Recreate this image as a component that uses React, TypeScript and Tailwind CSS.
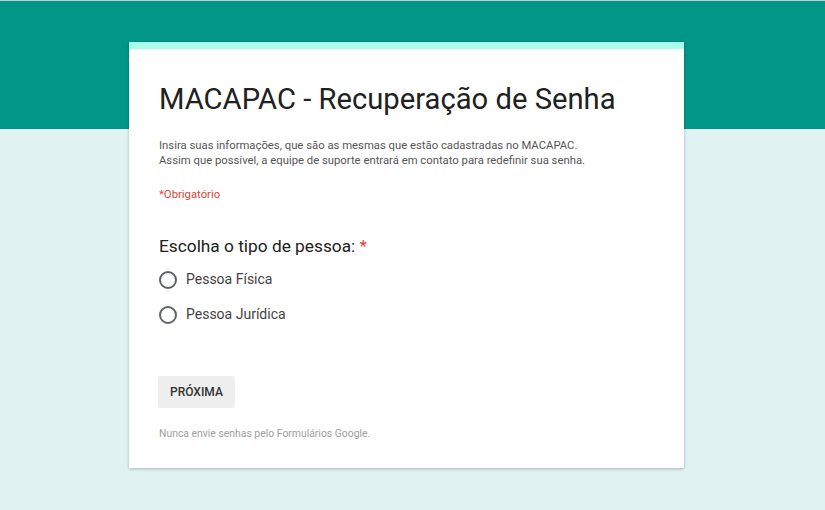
const RadioOption = ({ label }: { label: string }) => {
  return (
    <label className="flex items-center h-[35px] cursor-pointer">
      <span className="w-[18px] h-[18px] rounded-full border-2 border-[#5f6368] box-border" />
      <span className="ml-[9px] text-[14px] text-[#424242]">{label}</span>
    </label>
  );
};

const App = () => {
  return (
    <div className="min-h-[510px] bg-[#e0f2f1] font-['Roboto',sans-serif]">
      {/* ===== Header band ===== */}
      <div className="h-[1px] bg-[#c6c6c6]" />
      <div className="h-[128px] bg-[#009688]" />

      {/* ===== Form card ===== */}
      <div className="w-[555px] ml-[129px] -mt-[87px] bg-white shadow-[0_1px_3px_rgba(0,0,0,0.25)]">
        <div className="h-[7px] bg-[#a7ffeb]" />
        <div className="px-[30px] pt-[30px] pb-[27px]">
          <h1 className="text-[29.2px] leading-[40px] text-[#212121]">
            MACAPAC - Recuperação de Senha
          </h1>
          <p className="mt-[19px] text-[11.3px] leading-[15px] text-[#555]">
            Insira suas informações, que são as mesmas que estão cadastradas no MACAPAC.
            <br />
            Assim que possível, a equipe de suporte entrará em contato para redefinir sua senha.
          </p>
          <p className="mt-[19px] text-[11.3px] leading-[15px] text-[#db4437]">*Obrigatório</p>

          <div className="mt-[33px]">
            <p className="text-[17.3px] leading-[22px] text-[#212121]">
              Escolha o tipo de pessoa: <span className="text-[#db4437]">*</span>
            </p>
            <div className="mt-[5px]">
              <RadioOption label="Pessoa Física" />
              <RadioOption label="Pessoa Jurídica" />
            </div>
          </div>

          <button className="mt-[44px] -ml-[1px] h-[32px] px-[12px] rounded-[2px] bg-[#eeeeee] text-[12px] font-medium text-[#333]">
            PRÓXIMA
          </button>
          <p className="mt-[19px] text-[10.4px] leading-[14px] text-[#9e9e9e]">
            Nunca envie senhas pelo Formulários Google.
          </p>
        </div>
      </div>
    </div>
  );
};

export default App;
